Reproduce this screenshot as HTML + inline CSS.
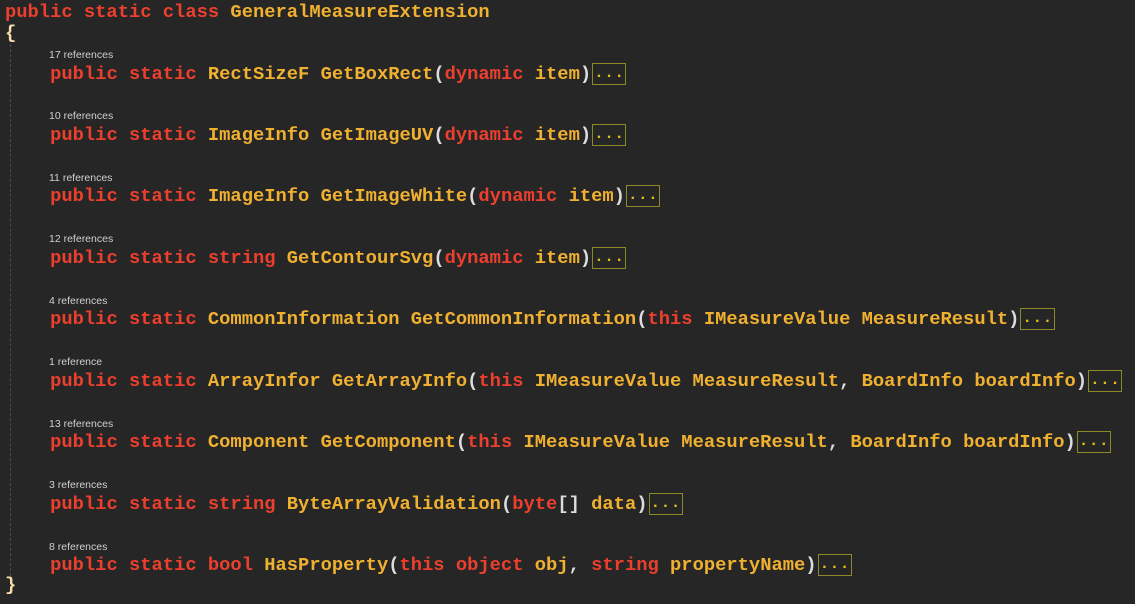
<!DOCTYPE html>
<html><head><style>
body{margin:0;width:1135px;height:604px;background:#262626;overflow:hidden;position:relative;font-family:"Liberation Mono",monospace;}
.l{position:absolute;left:5px;font-size:18.8px;line-height:22px;white-space:pre;color:#f0b030;font-weight:bold;}
.k{color:#ec3f2d}
.p{color:#dcdcdc}
.b{color:#f5deaa}
.r{position:absolute;left:49px;font-family:"Liberation Sans",sans-serif;font-size:10.5px;color:#d0d0d0;white-space:pre;}
.e{display:inline-block;border:1px solid #8c8a28;height:20px;line-height:18px;vertical-align:middle;color:#e0c020;font-size:16px;margin-left:1px;padding:0 1px;letter-spacing:0.5px;}
.g{position:absolute;left:10px;top:44px;height:532px;border-left:1px dashed #4a4a4a;}
</style></head><body>
<div class="g"></div>
<div class="l" style="top:1px"><span class="k">public static class</span> GeneralMeasureExtension</div>
<div class="l b" style="top:22px">{</div>

<div class="r" style="top:49px">17 references</div>
<div class="l" style="top:63px">    <span class="k">public static</span> RectSizeF GetBoxRect<span class="p">(</span><span class="k">dynamic</span> item<span class="p">)</span><span class="e">...</span></div>

<div class="r" style="top:110px">10 references</div>
<div class="l" style="top:124px">    <span class="k">public static</span> ImageInfo GetImageUV<span class="p">(</span><span class="k">dynamic</span> item<span class="p">)</span><span class="e">...</span></div>

<div class="r" style="top:172px">11 references</div>
<div class="l" style="top:185px">    <span class="k">public static</span> ImageInfo GetImageWhite<span class="p">(</span><span class="k">dynamic</span> item<span class="p">)</span><span class="e">...</span></div>

<div class="r" style="top:233px">12 references</div>
<div class="l" style="top:247px">    <span class="k">public static string</span> GetContourSvg<span class="p">(</span><span class="k">dynamic</span> item<span class="p">)</span><span class="e">...</span></div>

<div class="r" style="top:295px">4 references</div>
<div class="l" style="top:308px">    <span class="k">public static</span> CommonInformation GetCommonInformation<span class="p">(</span><span class="k">this</span> IMeasureValue MeasureResult<span class="p">)</span><span class="e">...</span></div>

<div class="r" style="top:356px">1 reference</div>
<div class="l" style="top:370px">    <span class="k">public static</span> ArrayInfor GetArrayInfo<span class="p">(</span><span class="k">this</span> IMeasureValue MeasureResult<span class="p">,</span> BoardInfo boardInfo<span class="p">)</span><span class="e">...</span></div>

<div class="r" style="top:418px">13 references</div>
<div class="l" style="top:431px">    <span class="k">public static</span> Component GetComponent<span class="p">(</span><span class="k">this</span> IMeasureValue MeasureResult<span class="p">,</span> BoardInfo boardInfo<span class="p">)</span><span class="e">...</span></div>

<div class="r" style="top:479px">3 references</div>
<div class="l" style="top:493px">    <span class="k">public static string</span> ByteArrayValidation<span class="p">(</span><span class="k">byte</span><span class="p">[]</span> data<span class="p">)</span><span class="e">...</span></div>

<div class="r" style="top:541px">8 references</div>
<div class="l" style="top:554px">    <span class="k">public static bool</span> HasProperty<span class="p">(</span><span class="k">this object</span> obj<span class="p">,</span> <span class="k">string</span> propertyName<span class="p">)</span><span class="e">...</span></div>

<div class="l b" style="top:574px">}</div>
</body></html>
